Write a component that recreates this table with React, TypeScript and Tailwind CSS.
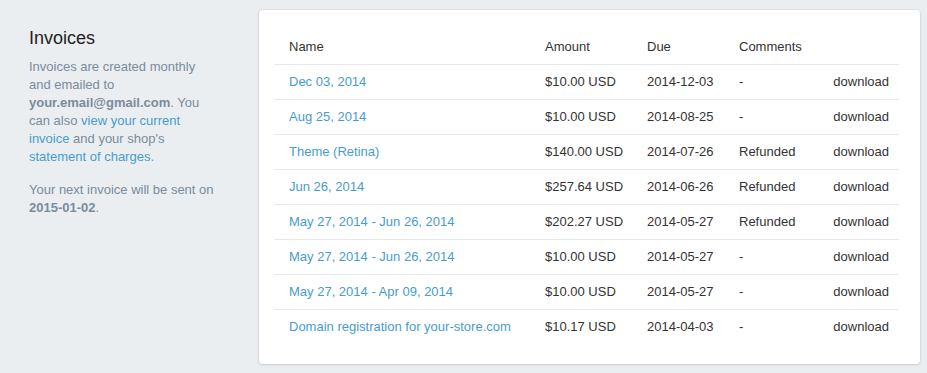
import React from 'react';

type Invoice = {
  name: string;
  amount: string;
  due: string;
  comment: string;
};

const invoices: Invoice[] = [
  { name: 'Dec 03, 2014', amount: '$10.00 USD', due: '2014-12-03', comment: '-' },
  { name: 'Aug 25, 2014', amount: '$10.00 USD', due: '2014-08-25', comment: '-' },
  { name: 'Theme (Retina)', amount: '$140.00 USD', due: '2014-07-26', comment: 'Refunded' },
  { name: 'Jun 26, 2014', amount: '$257.64 USD', due: '2014-06-26', comment: 'Refunded' },
  { name: 'May 27, 2014 - Jun 26, 2014', amount: '$202.27 USD', due: '2014-05-27', comment: 'Refunded' },
  { name: 'May 27, 2014 - Jun 26, 2014', amount: '$10.00 USD', due: '2014-05-27', comment: '-' },
  { name: 'May 27, 2014 - Apr 09, 2014', amount: '$10.00 USD', due: '2014-05-27', comment: '-' },
  { name: 'Domain registration for your-store.com', amount: '$10.17 USD', due: '2014-04-03', comment: '-' }
];

const App = () => {
  return (
    <div
      className="min-h-[373px] bg-[#ebeef0] flex pt-[10px] text-[13px] text-[#333]"
      style={{ fontFamily: '"Liberation Sans", Arial, sans-serif' }}
    >
      {/* Sidebar description */}
      <div className="w-[259px] shrink-0 pl-[29px] pt-[16px]">
        <div className="w-[190px]">
          <h2 className="text-[18px] leading-[24px] text-[#222] mb-[8px]">Invoices</h2>
          <p className="leading-[18px] text-[#798c9c]">
            Invoices are created monthly and emailed to{' '}
            <strong className="font-bold">your.email@gmail.com</strong>. You can also{' '}
            <a className="text-[#479ccf]" href="#">view your current invoice</a> and your shop's{' '}
            <a className="text-[#479ccf]" href="#">statement of charges.</a>
          </p>
          <p className="leading-[18px] text-[#798c9c] mt-[15px]">
            Your next invoice will be sent on <strong className="font-bold">2015-01-02</strong>.
          </p>
        </div>
      </div>

      {/* Invoice table card */}
      <div className="w-[661px] self-start bg-white rounded-[4px] shadow-[0_0_0_1px_rgba(63,63,68,0.05),0_1px_3px_0_rgba(63,63,68,0.15)] px-[15px] pt-[19px] pb-[20px]">
        <table className="w-[625px] table-fixed border-collapse">
          <colgroup>
            <col className="w-[256px]" />
            <col className="w-[102px]" />
            <col className="w-[92px]" />
            <col className="w-[93px]" />
            <col />
          </colgroup>
          <thead>
            <tr className="h-[35px] border-b border-[#e6e9ec]">
              <th className="text-left font-normal pl-[15px]">Name</th>
              <th className="text-left font-normal pl-[15px]">Amount</th>
              <th className="text-left font-normal pl-[15px]">Due</th>
              <th className="text-left font-normal pl-[15px]">Comments</th>
              <th />
            </tr>
          </thead>
          <tbody>
            {invoices.map((inv, i) => (
              <tr
                key={i}
                className={`h-[35px] ${i < invoices.length - 1 ? 'border-b border-[#e6e9ec]' : ''}`}
              >
                <td className="pl-[15px] whitespace-nowrap">
                  <a className="text-[#479ccf]" href="#">{inv.name}</a>
                </td>
                <td className="pl-[15px] whitespace-nowrap">{inv.amount}</td>
                <td className="pl-[15px] whitespace-nowrap">{inv.due}</td>
                <td className="pl-[15px] whitespace-nowrap">{inv.comment}</td>
                <td className="pr-[10px] text-right">download</td>
              </tr>
            ))}
          </tbody>
        </table>
      </div>
    </div>
  );
};

export default App;
